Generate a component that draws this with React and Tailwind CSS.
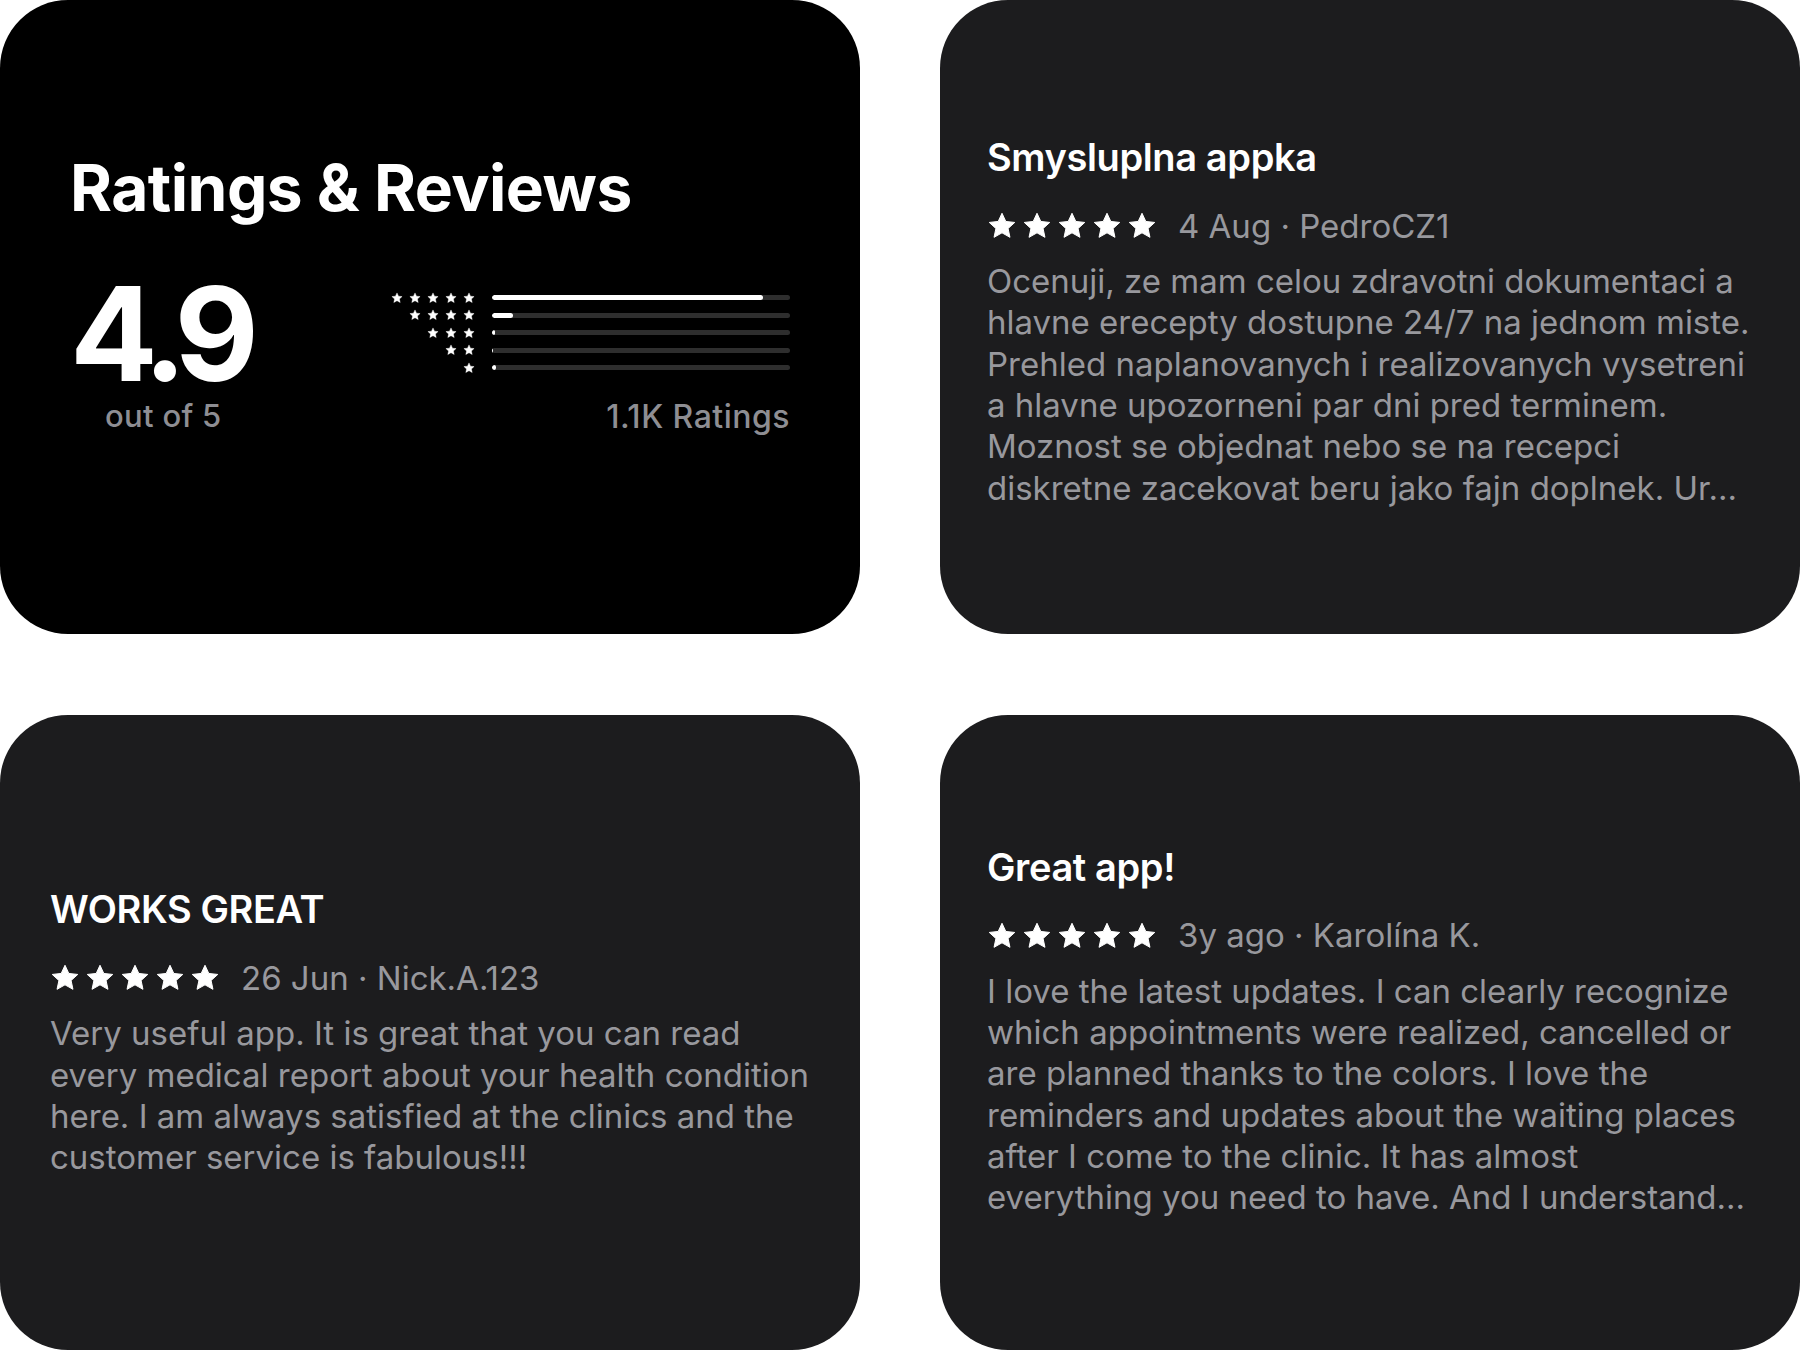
const reviews = [
  {
    title: "Smysluplna appka",
    meta: "4 Aug · PedroCZ1",
    pad: "px-[47px] pt-[9px]",
    lines: [
      "Ocenuji, ze mam celou zdravotni dokumentaci a",
      "hlavne erecepty dostupne 24/7 na jednom miste.",
      "Prehled naplanovanych i realizovanych vysetreni",
      "a hlavne upozorneni par dni pred terminem.",
      "Moznost se objednat nebo se na recepci",
      "diskretne zacekovat beru jako fajn doplnek. Ur...",
    ],
  },
  {
    title: "WORKS GREAT",
    meta: "26 Jun · Nick.A.123",
    pad: "px-[50px]",
    lines: [
      "Very useful app. It is great that you can read",
      "every medical report about your health condition",
      "here. I am always satisfied at the clinics and the",
      "customer service is fabulous!!!",
    ],
  },
  {
    title: "Great app!",
    meta: "3y ago · Karolína K.",
    pad: "px-[47px] pb-[3px]",
    lines: [
      "I love the latest updates. I can clearly recognize",
      "which appointments were realized, cancelled or",
      "are planned thanks to the colors. I love the",
      "reminders and updates about the waiting places",
      "after I come to the clinic. It has almost",
      "everything you need to have. And I understand...",
    ],
  },
];

// rating histogram, percent of the bar filled
const histogram = [
  { stars: 5, pct: 91 },
  { stars: 4, pct: 7 },
  { stars: 3, pct: 1 },
  { stars: 2, pct: 0.5 },
  { stars: 1, pct: 1.5 },
];

function Star({ className }) {
  return (
    <svg viewBox="0 0 24 24" className={className} fill="currentColor">
      <path
        d="M12 1.8l3.05 6.55 7.15.8-5.33 4.85 1.5 7.05L12 17.45l-6.37 3.6 1.5-7.05L1.8 9.15l7.15-.8z"
        strokeLinejoin="round"
        stroke="currentColor"
        strokeWidth="0.8"
      />
    </svg>
  );
}

function Summary() {
  return (
    <div className="bg-black rounded-[68px] px-[70px] pt-[156px] text-white">
      <h2 className="text-[64px] font-bold leading-none tracking-[-0.008em]">
        Ratings &amp; Reviews
      </h2>

      <div className="flex justify-between mt-[49px]">
        <div className="flex flex-col items-center">
          <div className="text-[130px] font-bold leading-[120px] tracking-[-0.08em] pr-[8px] mt-[5px]">
            4.9
          </div>
          <div className="text-[31px] font-medium leading-none tracking-[0.01em] text-[#8e8e93] mt-[6px]">
            out of 5
          </div>
        </div>

        <div className="flex flex-col items-end">
          <div className="flex flex-col mt-[20px]">
            {histogram.map((row) => (
              <div key={row.stars} className="flex items-center h-[17.5px]">
                <div className="w-[88px] flex justify-end gap-[6px]">
                  {Array.from({ length: row.stars }).map((_, i) => (
                    <Star key={i} className="w-[12px] h-[12px] text-white" />
                  ))}
                </div>
                <div className="ml-[17px] w-[298px] h-[5px] rounded-full bg-[#2e2e2e] overflow-hidden">
                  <div
                    className="h-full rounded-full bg-white"
                    style={{ width: row.pct + "%" }}
                  />
                </div>
              </div>
            ))}
          </div>
          <div className="text-[32px] font-medium leading-none tracking-[0.015em] text-[#8e8e93] mt-[24px]">
            1.1K Ratings
          </div>
        </div>
      </div>
    </div>
  );
}

function ReviewCard({ review }) {
  return (
    <div
      className={
        "bg-[#1c1c1e] rounded-[68px] flex flex-col justify-center " + review.pad
      }
    >
      <div className="text-[38px] font-semibold leading-[46px] text-white tracking-[-0.01em]">
        {review.title}
      </div>
      <div className="flex items-center h-[46px] mt-[23px]">
        <div className="flex gap-[5px]">
          {[0, 1, 2, 3, 4].map((i) => (
            <Star key={i} className="w-[30px] h-[30px] text-white" />
          ))}
        </div>
        <span className="ml-[21px] text-[33px] leading-none text-[#98989d]">
          {review.meta}
        </span>
      </div>
      <div className="mt-[12px] text-[33px] leading-[41.3px] text-[#98989d]">
        {review.lines.map((line, i) => (
          <div key={i} className="whitespace-nowrap">
            {line}
          </div>
        ))}
      </div>
    </div>
  );
}

export default function App() {
  return (
    <div
      className="w-[1800px] h-[1351px] bg-white grid grid-cols-[860px_860px] grid-rows-[634px_635px] gap-x-[80px] gap-y-[81px]"
      style={{ fontFamily: "Inter, 'Noto Sans', sans-serif" }}
    >
      <Summary />
      <ReviewCard review={reviews[0]} />
      <ReviewCard review={reviews[1]} />
      <ReviewCard review={reviews[2]} />
    </div>
  );
}
